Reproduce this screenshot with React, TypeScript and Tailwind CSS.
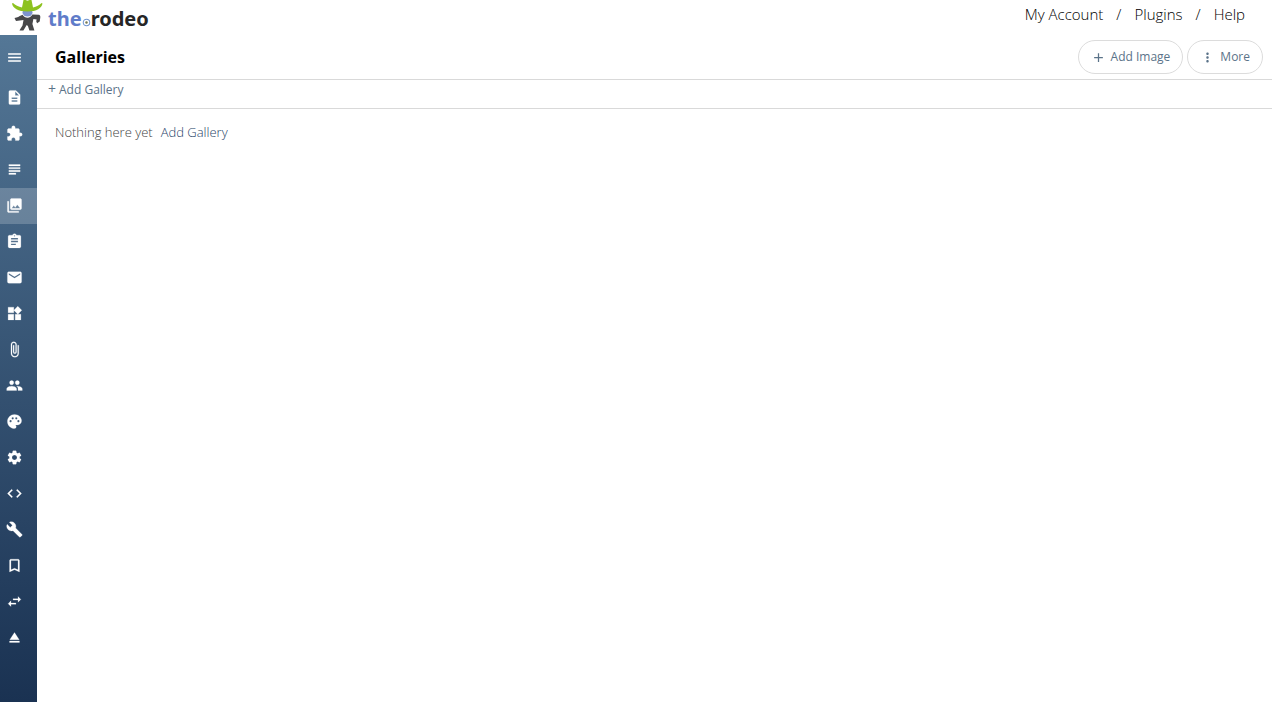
import React from 'react';
import type { IconType } from 'react-icons';
import {
  MdAdd,
  MdAssignment,
  MdAttachFile,
  MdBookmarkBorder,
  MdBuild,
  MdCode,
  MdDescription,
  MdEject,
  MdEmail,
  MdExtension,
  MdMenu,
  MdMoreVert,
  MdPalette,
  MdPeople,
  MdPhotoLibrary,
  MdSettings,
  MdSubject,
  MdSwapHoriz,
  MdWidgets,
} from 'react-icons/md';

const navItems: { id: string; label: string; icon: IconType }[] = [
  { id: 'pages', label: 'Pages', icon: MdDescription },
  { id: 'plugins', label: 'Plugins', icon: MdExtension },
  { id: 'blog', label: 'Blog', icon: MdSubject },
  { id: 'galleries', label: 'Galleries', icon: MdPhotoLibrary },
  { id: 'forms', label: 'Forms', icon: MdAssignment },
  { id: 'email', label: 'Email', icon: MdEmail },
  { id: 'widgets', label: 'Widgets', icon: MdWidgets },
  { id: 'files', label: 'Files', icon: MdAttachFile },
  { id: 'users', label: 'Users', icon: MdPeople },
  { id: 'theme', label: 'Theme', icon: MdPalette },
  { id: 'settings', label: 'Settings', icon: MdSettings },
  { id: 'code', label: 'Code', icon: MdCode },
  { id: 'tools', label: 'Tools', icon: MdBuild },
  { id: 'bookmarks', label: 'Bookmarks', icon: MdBookmarkBorder },
  { id: 'redirects', label: 'Redirects', icon: MdSwapHoriz },
  { id: 'logout', label: 'Log out', icon: MdEject },
];

const topLinks = ['My Account', 'Plugins', 'Help'];

const CowboyMark = () => (
  <svg width="32" height="32" viewBox="0 0 32 32" aria-hidden="true">
    <ellipse cx="16.500" cy="12.500" rx="5" ry="4" fill="#7d93cf" />
    <path
      d="M1 3.500C1.800 8 7 11.500 16.500 11.500S30.500 8 31.500 3.500l-.9-.4c-2.100 2.300-5.100 3.900-8.600 4.300L20.500 0h-2L16.500.8 14.500 0h-2l-1.500 7.400C7.500 6.800 4.200 5.400 2 3.100z"
      fill="#8dc220"
    />
    <path
      d="M3.500 18c3-.4 4.500-1.500 7-2.700l1-.5c1.300 2 3 3 5 3 2.200 0 3.900-1.200 4.900-3.200l6.300.2c1.300.3 1.800 1.300 1.600 2.600l-.6 4-2.600 1.800-.9-2 .5-1.800-3.300-.5-1 5 2 6.500h-5l-1.500-4.500-1.200-1-1.500 2.500-1.800 3H8.500l.5-1 2.500-4 1-5.500-7.500 1z"
      fill="#474749"
    />
  </svg>
);

const Logo = () => (
  <a href="#" aria-label="the.rodeo" className="flex h-[35px] items-start pl-[11px]">
    <CowboyMark />
    <span className="flex items-center pt-[7px] pl-[5px] font-['Noto_Sans'] text-xl leading-6 font-bold">
      <span className="text-[#5f7cc9]">the</span>
      <svg width="9" height="9" viewBox="0 0 8 8" className="mt-1.5" aria-hidden="true">
        <circle cx="4" cy="4" r="2.900" fill="#fff" stroke="#6f93cf" strokeWidth=".9" />
        <circle cx="4" cy="4" r="1.100" fill="#777a50" />
      </svg>
      <span className="text-[#262626]">rodeo</span>
    </span>
  </a>
);

// the icons carry an unfilled bounding path, which must not pick up the stroke
const Sidebar = () => (
  <nav className="flex w-[37px] shrink-0 flex-col bg-gradient-to-b from-[#547796] to-[#1a3252] text-white [&_path[fill=none]]:hidden">
    <button aria-label="Menu" className="flex h-[45px] items-center pl-[6px]">
      <MdMenu size={17} />
    </button>
    {navItems.map(({ id, label, icon: Icon }) => (
      <a
        key={id}
        href={`#${id}`}
        aria-label={label}
        className={`flex h-9 items-center pb-0.5 pl-[6px] ${id === 'galleries' ? 'bg-white/20' : ''}`}
      >
        <Icon size={17} strokeWidth={0.3} />
      </a>
    ))}
  </nav>
);

const App = () => (
  <div className="flex min-h-screen flex-col bg-white font-['Open_Sans',sans-serif] text-[13px]">
    <header className="flex h-[35px] items-start justify-between">
      <Logo />
      <div className="flex gap-[13px] pt-1 pr-[27px] text-[15px] leading-5 font-light text-black">
        {topLinks.map((link, i) => (
          <React.Fragment key={link}>
            {i > 0 && <span>/</span>}
            <a href="#">{link}</a>
          </React.Fragment>
        ))}
      </div>
    </header>

    <div className="flex flex-1">
      <Sidebar />
      <main className="flex-1">
        <div className="flex h-[45px] items-center justify-between border-b border-[#d9d9d9] pr-[9px] pl-[18px]">
          <h1 className="text-base font-bold text-black">Galleries</h1>
          <div className="flex gap-1 text-xs text-[#5b7389]">
            <button className="flex h-[34px] items-center gap-[5px] rounded-full border border-[#dcdcdc] px-3">
              <MdAdd size={15} />
              Add Image
            </button>
            <button className="flex h-[34px] items-center gap-[5px] rounded-full border border-[#dcdcdc] px-3">
              <MdMoreVert size={15} />
              More
            </button>
          </div>
        </div>
        <div className="h-[29px] border-b border-[#d9d9d9] pl-[11px] text-xs leading-5 text-[#5b7389]">
          <button className="flex items-start gap-[3px]">
            <span className="-mt-px text-sm leading-5">+</span>
            Add Gallery
          </button>
        </div>
        <p className="flex gap-2 pt-[13px] pl-[18px] leading-5 font-light text-[#444]">
          Nothing here yet
          <a href="#" className="text-[#1f4468]">
            Add Gallery
          </a>
        </p>
      </main>
    </div>
  </div>
);

export default App;
